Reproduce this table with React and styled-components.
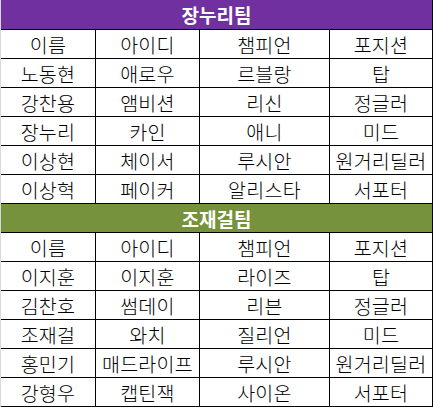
import React from 'react';
import styled, { createGlobalStyle } from 'styled-components';

const GlobalStyle = createGlobalStyle`
  html, body {
    margin: 0;
    padding: 0;
    background: #ffffff;
  }
  * {
    box-sizing: border-box;
  }
`;

const Sheet = styled.div`
  width: 434px;
  display: flex;
  flex-direction: column;
  font-family: 'Noto Sans CJK KR', 'Noto Sans', sans-serif;
`;

const TeamTable = styled.div`
  display: grid;
  grid-template-columns: 95px 104px 130px 103px;
  width: 433px;
  border-left: 1px solid #d6d9dc;
`;

const TeamBar = styled.div`
  grid-column: 1 / -1;
  height: ${p => p.$height}px;
  background-color: ${p => p.$color};
  border-right: 1px solid #000;
  border-bottom: 1px solid #000;
  color: #ffffff;
  font-size: 19px;
  font-weight: bold;
  display: flex;
  align-items: center;
  justify-content: center;
`;

const Cell = styled.div`
  height: 29px;
  border-right: 1px solid #000;
  border-bottom: 1px solid #000;
  color: #000;
  font-size: 19.5px;
  font-weight: 300;
  letter-spacing: 0.3px;
  display: flex;
  align-items: center;
  justify-content: center;
  white-space: nowrap;
`;

const columns = ['이름', '아이디', '챔피언', '포지션'];

const teams = [
  {
    name: '장누리팀',
    color: '#7030a0',
    height: 30,
    players: [
      ['노동현', '애로우', '르블랑', '탑'],
      ['강찬용', '앰비션', '리신', '정글러'],
      ['장누리', '카인', '애니', '미드'],
      ['이상현', '체이서', '루시안', '원거리딜러'],
      ['이상혁', '페이커', '알리스타', '서포터'],
    ],
  },
  {
    name: '조재걸팀',
    color: '#76923c',
    height: 29,
    players: [
      ['이지훈', '이지훈', '라이즈', '탑'],
      ['김찬호', '썸데이', '리븐', '정글러'],
      ['조재걸', '와치', '질리언', '미드'],
      ['홍민기', '매드라이프', '루시안', '원거리딜러'],
      ['강형우', '캡틴잭', '사이온', '서포터'],
    ],
  },
];

const Team = ({ team }) => (
  <TeamTable>
    <TeamBar $color={team.color} $height={team.height}>{team.name}</TeamBar>
    {columns.map(c => (
      <Cell key={c}>{c}</Cell>
    ))}
    {team.players.map((row, i) =>
      row.map((v, j) => <Cell key={i + '-' + j}>{v}</Cell>)
    )}
  </TeamTable>
);

const App = () => (
  <>
    <GlobalStyle />
    <Sheet>
      {teams.map(t => (
        <Team key={t.name} team={t} />
      ))}
    </Sheet>
  </>
);

export default App;
